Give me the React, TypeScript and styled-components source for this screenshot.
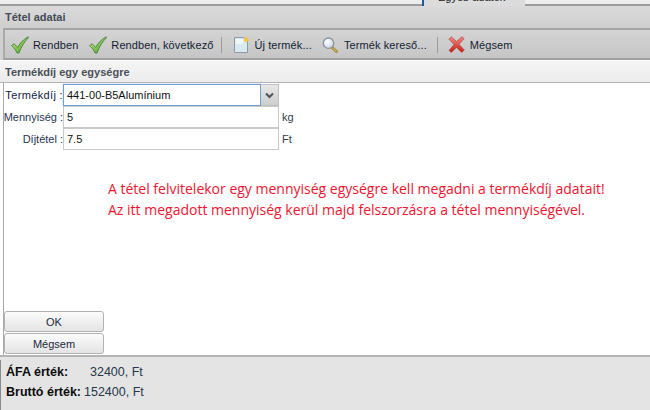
import React from "react";
import styled, { createGlobalStyle } from "styled-components";

const GlobalStyle = createGlobalStyle`
  html, body {
    margin: 0;
    padding: 0;
    background: #ffffff;
  }
  #root {
    width: 650px;
    height: 410px;
    overflow: hidden;
  }
`;

const CheckIcon = ({ id }: { id: string }) => (
  <svg width="18" height="18" viewBox="0 0 18 18">
    <defs>
      <linearGradient id={id} x1="0" y1="0" x2="1" y2="1">
        <stop offset="0" stopColor="#c6f08c" />
        <stop offset="1" stopColor="#3c9a1c" />
      </linearGradient>
    </defs>
    <path
      d="M0.6 9.6 L3.2 7.8 L6.6 11.4 C8.8 7.4 12.4 3.4 17.2 0.8 L17.6 1.6 C13.6 5.4 10.4 10.6 8 17 L6 17 C4.8 14.2 3 11.8 0.6 9.6 Z"
      fill={`url(#${id})`}
      stroke="#3a6b2a"
      strokeWidth="0.7"
    />
  </svg>
);

const NewDocIcon = () => (
  <svg width="16" height="18" viewBox="0 0 16 18">
    <path d="M1.5 1.5 H10.5 L14.5 5.5 V16.5 H1.5 Z" fill="#d9e9f2" stroke="#8c9aa3" strokeWidth="1" />
    <path d="M3 3 H10 V8 H3 Z" fill="#eef6fa" />
    <path
      d="M13 0 L13.8 2 L15.8 1.6 L15 3.5 L16 5 L14.2 5 L13 6.8 L12 5 L10.2 4.6 L11.8 3.2 Z"
      fill="#f7c531"
    />
  </svg>
);

const SearchIcon = () => (
  <svg width="16" height="16" viewBox="0 0 16 16">
    <defs>
      <radialGradient id="lens" cx="0.4" cy="0.35" r="0.7">
        <stop offset="0" stopColor="#ffffff" />
        <stop offset="1" stopColor="#c3d6e4" />
      </radialGradient>
    </defs>
    <path d="M9.5 10 L14.5 14.5" stroke="#a88a36" strokeWidth="3" strokeLinecap="round" />
    <path d="M11 11.4 L14.4 14.4" stroke="#e0c566" strokeWidth="1" strokeLinecap="round" />
    <circle cx="6.5" cy="6.2" r="5.2" fill="url(#lens)" stroke="#8d979e" strokeWidth="1.4" />
  </svg>
);

const CancelIcon = () => (
  <svg width="17" height="17" viewBox="0 0 20 20">
    <defs>
      <linearGradient id="crs" x1="0" y1="0" x2="0" y2="1">
        <stop offset="0" stopColor="#f08a80" />
        <stop offset="1" stopColor="#c8201c" />
      </linearGradient>
    </defs>
    <path
      d="M1 3.5 L4 1 L10 6.4 L16.4 0.8 L19 3 L13 9.8 L19.2 16.6 L16 19.4 L10 13.4 L4 19.4 L1.2 17 L7 10 Z"
      fill="url(#crs)"
      stroke="#a8413c"
      strokeWidth="0.7"
    />
  </svg>
);

const Chevron = () => (
  <svg width="9" height="7" viewBox="0 0 9 7">
    <path d="M1 1.5 L4.5 5 L8 1.5" fill="none" stroke="#4a5560" strokeWidth="2" />
  </svg>
);

const Page = styled.div`
  display: flex;
  flex-direction: column;
  width: 650px;
  height: 410px;
  font-family: "Liberation Sans", Arial, sans-serif;
  font-size: 11px;
  color: #1c2a3a;
  background: #ffffff;
`;

const TopStrip = styled.div`
  display: flex;
  justify-content: flex-end;
  height: 6px;
  box-sizing: border-box;
  padding-right: 125px;
  background: #ededed;
  border-bottom: 2px solid #9c9c9c;
`;

const TopTab = styled.div`
  width: 103px;
  height: 6px;
  overflow: hidden;
  background: #dcdcdc;
  border-left: 2px solid #1c5a9c;
  color: #222222;
  font-size: 11px;
  line-height: 12px;
  padding-left: 14px;
  box-sizing: border-box;
  white-space: nowrap;
`;

const TabCaption = styled.span`
  display: block;
  margin-top: -9px;
`;

const TitleBar = styled.div`
  height: 22px;
  display: flex;
  align-items: center;
  padding-left: 5px;
  background: linear-gradient(#dadada, #cfcfcf);
  font-weight: bold;
  font-size: 11px;
  color: #444c55;
`;

const ToolbarRow = styled.div`
  background: #d0d0d0;
`;

const Toolbar = styled.div`
  display: flex;
  align-items: center;
  height: 32px;
  box-sizing: border-box;
  padding: 1px 0 0 6px;
  margin-left: 3px;
  border-top: 2px solid #a5a5a5;
  border-bottom: 2px solid #a0a0a0;
  border-left: 2px solid #aaaaaa;
  background: linear-gradient(#d4d4d4, #c6c6c6);
`;

const ToolButton = styled.div<{ $gap?: number; $trail?: number }>`
  display: flex;
  align-items: center;
  gap: ${(p) => p.$gap ?? 4}px;
  margin-right: ${(p) => p.$trail ?? 9}px;
  font-size: 11px;
  letter-spacing: 0.1px;
  color: #141c33;
  white-space: nowrap;
`;

const ToolDivider = styled.div<{ $trail?: number }>`
  width: 1px;
  height: 16px;
  margin-right: ${(p) => p.$trail ?? 11}px;
  background: #9b9b9b;
`;

const SectionHeader = styled.div`
  height: 23px;
  display: flex;
  align-items: center;
  padding: 1px 0 0 5px;
  border-top: 1px solid #ffffff;
  background: linear-gradient(#f4f4f4, #ececec);
  border-bottom: 1px solid #b4b4b4;
  box-sizing: border-box;
  font-weight: bold;
  font-size: 11px;
  color: #4a5058;
`;

const Panel = styled.div`
  flex: 1;
  position: relative;
  display: flex;
  flex-direction: column;
  justify-content: space-between;
  margin-left: 3px;
  border-left: 1px solid #a8a8a8;
  padding: 1px 0;
  background: #ffffff;
`;

const PanelRule = styled.div`
  height: 2px;
  background: #b4b4b4;
`;

const Form = styled.div`
  display: grid;
  grid-template-columns: 59px 198px 18px auto;
  grid-auto-rows: 22px;
  width: 320px;
`;

const FieldLabel = styled.label`
  display: flex;
  align-items: center;
  justify-content: flex-end;
  font-size: 11px;
  color: #1d3553;
  white-space: nowrap;
`;

const ComboLabel = styled(FieldLabel)`
  letter-spacing: 0.35px;
  color: #0d2340;
`;

const ComboBox = styled.div`
  display: flex;
  align-items: center;
  box-sizing: border-box;
  height: 22px;
  padding-left: 3px;
  border: 1px solid #6f9fd8;
  box-shadow: 0 0 1px #6f9fd8;
  color: #111111;
  font-size: 11px;
`;

const FieldBox = styled.div`
  grid-column: span 2;
  display: flex;
  align-items: center;
  box-sizing: border-box;
  height: 22px;
  padding-left: 3px;
  border: 1px solid #c9c9c9;
  color: #111111;
  font-size: 11px;
`;

const ComboArrow = styled.div`
  height: 22px;
  box-sizing: border-box;
  border: 1px solid #c0c0c0;
  border-left: none;
  background: linear-gradient(#e8e8e8, #cdcdcd);
  display: flex;
  align-items: center;
  justify-content: center;
`;

const Unit = styled.div`
  display: flex;
  align-items: center;
  padding-left: 3px;
  font-size: 11px;
  color: #333d48;
`;

const Notice = styled.div`
  position: absolute;
  left: 104px;
  top: 95px;
  color: #f0142f;
  font-family: "Open Sans", "Noto Sans", sans-serif;
  font-size: 14px;
  line-height: 21px;
  white-space: nowrap;
`;

const ButtonStack = styled.div`
  display: flex;
  flex-direction: column;
  gap: 1px;
  width: 100px;
`;

const PushButton = styled.div`
  height: 21px;
  box-sizing: border-box;
  display: flex;
  align-items: center;
  justify-content: center;
  border: 1px solid #b2b2b2;
  border-radius: 3px;
  background: linear-gradient(#fbfbfb, #e4e4e4);
  font-size: 11px;
  color: #1a2a3c;
`;

const Footer = styled.div`
  position: relative;
  height: 53px;
  box-sizing: border-box;
  padding: 5px 0 0 6px;
  background: #e4e4e4;
  display: grid;
  grid-template-columns: 78px auto;
  grid-auto-rows: 20px;
  justify-content: start;
  font-size: 12.5px;

  &::before {
    content: "";
    position: absolute;
    left: 0;
    top: 3px;
    bottom: 0;
    width: 1px;
    background: #8a8a8a;
  }
`;

const TotalLabel = styled.div`
  display: flex;
  align-items: center;
  font-weight: bold;
  color: #0c0c0c;
  white-space: nowrap;
`;

const TotalValue = styled.div<{ $indent?: number }>`
  display: flex;
  align-items: center;
  padding-left: ${(p) => p.$indent ?? 0}px;
  color: #26364a;
  white-space: nowrap;
`;

export default function App() {
  return (
    <Page>
      <GlobalStyle />
      <TopStrip>
        <TopTab>
          <TabCaption>Egyéb adatok</TabCaption>
        </TopTab>
      </TopStrip>
      <TitleBar>Tétel adatai</TitleBar>
      <ToolbarRow>
        <Toolbar>
          <ToolButton $trail={11}><CheckIcon id="chk1" />Rendben</ToolButton>
          <ToolButton $trail={8}><CheckIcon id="chk2" />Rendben, következő</ToolButton>
          <ToolDivider />
          <ToolButton $gap={5} $trail={10}><NewDocIcon />Új termék...</ToolButton>
          <ToolButton $gap={6} $trail={10}><SearchIcon />Termék kereső...</ToolButton>
          <ToolDivider $trail={10} />
          <ToolButton $gap={5}><CancelIcon />Mégsem</ToolButton>
        </Toolbar>
      </ToolbarRow>
      <SectionHeader>Termékdíj egy egységre</SectionHeader>
      <Panel>
        <Form>
          <ComboLabel>Termékdíj :</ComboLabel>
          <ComboBox>441-00-B5Alumínium</ComboBox>
          <ComboArrow><Chevron /></ComboArrow>
          <span />
          <FieldLabel>Mennyiség :</FieldLabel>
          <FieldBox>5</FieldBox>
          <Unit>kg</Unit>
          <FieldLabel>Díjtétel :</FieldLabel>
          <FieldBox>7.5</FieldBox>
          <Unit>Ft</Unit>
        </Form>
        <Notice>
          A tétel felvitelekor egy mennyiség egységre kell megadni a termékdíj adatait!
          <br />
          Az itt megadott mennyiség kerül majd felszorzásra a tétel mennyiségével.
        </Notice>
        <ButtonStack>
          <PushButton>OK</PushButton>
          <PushButton>Mégsem</PushButton>
        </ButtonStack>
      </Panel>
      <PanelRule />
      <Footer>
        <TotalLabel>ÁFA érték:</TotalLabel>
        <TotalValue $indent={6}>32400, Ft</TotalValue>
        <TotalLabel>Bruttó érték:</TotalLabel>
        <TotalValue>152400, Ft</TotalValue>
      </Footer>
    </Page>
  );
}
